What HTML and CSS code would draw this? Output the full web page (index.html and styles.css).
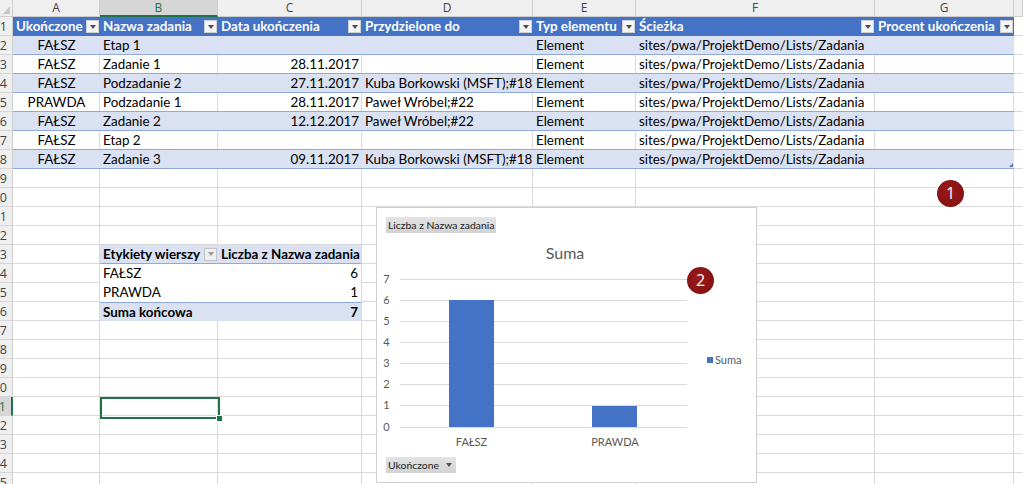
FILE: index.html
```html
<!DOCTYPE html>
<html lang="pl">
<head>
<meta charset="utf-8">
<title>Zadania</title>
<link rel="stylesheet" href="styles.css">
</head>
<body>
<div class="app">
  <div class="sheet">
    <div class="corner"></div>
    <div class="ch">A</div>
    <div class="ch selcol">B</div>
    <div class="ch">C</div>
    <div class="ch">D</div>
    <div class="ch">E</div>
    <div class="ch">F</div>
    <div class="ch">G</div>
    <div class="ch"></div>

    <div class="rowheads">
      <div class="rh">1</div><div class="rh">2</div><div class="rh">3</div><div class="rh">4</div><div class="rh">5</div>
      <div class="rh">6</div><div class="rh">7</div><div class="rh">8</div><div class="rh">9</div><div class="rh">10</div>
      <div class="rh">11</div><div class="rh">12</div><div class="rh">13</div><div class="rh">14</div><div class="rh">15</div>
      <div class="rh">16</div><div class="rh">17</div><div class="rh">18</div><div class="rh">19</div><div class="rh">20</div>
      <div class="rh selrow">21</div><div class="rh">22</div><div class="rh">23</div><div class="rh">24</div><div class="rh">25</div>
    </div>

    <div class="vl col-a"></div>
    <div class="vl col-b"></div>
    <div class="vl col-c"></div>
    <div class="vl col-d"></div>
    <div class="vl col-e"></div>
    <div class="vl col-f"></div>
    <div class="vl col-g"></div>

    <div class="tbl">
      <div class="tr th">
        <div class="hc"><span>Ukończone</span><i class="dd"></i></div>
        <div class="hc"><span>Nazwa zadania</span><i class="dd"></i></div>
        <div class="hc"><span>Data ukończenia</span><i class="dd"></i></div>
        <div class="hc"><span>Przydzielone do</span><i class="dd"></i></div>
        <div class="hc"><span>Typ elementu</span><i class="dd"></i></div>
        <div class="hc"><span>Ścieżka</span><i class="dd"></i></div>
        <div class="hc"><span>Procent ukończenia</span><i class="dd"></i></div>
      </div>
      <div class="tr band">
        <div class="c ctr">FAŁSZ</div><div class="c">Etap 1</div><div class="c r"></div><div class="c"></div><div class="c">Element</div><div class="c">sites/pwa/ProjektDemo/Lists/Zadania</div><div class="c"></div>
      </div>
      <div class="tr">
        <div class="c ctr">FAŁSZ</div><div class="c">Zadanie 1</div><div class="c r">28.11.2017</div><div class="c"></div><div class="c">Element</div><div class="c">sites/pwa/ProjektDemo/Lists/Zadania</div><div class="c"></div>
      </div>
      <div class="tr band">
        <div class="c ctr">FAŁSZ</div><div class="c">Podzadanie 2</div><div class="c r">27.11.2017</div><div class="c">Kuba Borkowski (MSFT);#18</div><div class="c">Element</div><div class="c">sites/pwa/ProjektDemo/Lists/Zadania</div><div class="c"></div>
      </div>
      <div class="tr">
        <div class="c ctr">PRAWDA</div><div class="c">Podzadanie 1</div><div class="c r">28.11.2017</div><div class="c">Paweł Wróbel;#22</div><div class="c">Element</div><div class="c">sites/pwa/ProjektDemo/Lists/Zadania</div><div class="c"></div>
      </div>
      <div class="tr band">
        <div class="c ctr">FAŁSZ</div><div class="c">Zadanie 2</div><div class="c r">12.12.2017</div><div class="c">Paweł Wróbel;#22</div><div class="c">Element</div><div class="c">sites/pwa/ProjektDemo/Lists/Zadania</div><div class="c"></div>
      </div>
      <div class="tr">
        <div class="c ctr">FAŁSZ</div><div class="c">Etap 2</div><div class="c r"></div><div class="c"></div><div class="c">Element</div><div class="c">sites/pwa/ProjektDemo/Lists/Zadania</div><div class="c"></div>
      </div>
      <div class="tr band last">
        <div class="c ctr">FAŁSZ</div><div class="c">Zadanie 3</div><div class="c r">09.11.2017</div><div class="c">Kuba Borkowski (MSFT);#18</div><div class="c">Element</div><div class="c">sites/pwa/ProjektDemo/Lists/Zadania</div><div class="c"></div>
      </div>
      <i class="resize"></i>
    </div>

    <div class="pivot">
      <div class="pr ph">
        <div class="hc"><span>Etykiety wierszy</span><i class="dd pdd"></i></div>
        <div class="c">Liczba z Nazwa zadania</div>
      </div>
      <div class="pr"><div class="c">FAŁSZ</div><div class="c r">6</div></div>
      <div class="pr"><div class="c">PRAWDA</div><div class="c r">1</div></div>
      <div class="pr pt"><div class="c">Suma końcowa</div><div class="c r">7</div></div>
    </div>

    <div class="sel"><i class="handle"></i></div>
  </div>

  <div class="chart">
    <div class="fbtn">Liczba z Nazwa zadania</div>
    <svg class="plot" width="379" height="224" viewBox="0 0 379 224">
      <text class="title" x="188" y="26" text-anchor="middle">Suma</text>
      <g class="grid">
        <line x1="23" x2="310" y1="46.5" y2="46.5"/>
        <line x1="23" x2="310" y1="67.5" y2="67.5"/>
        <line x1="23" x2="310" y1="88.5" y2="88.5"/>
        <line x1="23" x2="310" y1="109.5" y2="109.5"/>
        <line x1="23" x2="310" y1="130.5" y2="130.5"/>
        <line x1="23" x2="310" y1="151.5" y2="151.5"/>
        <line x1="23" x2="310" y1="172.5" y2="172.5"/>
        <line x1="23" x2="310" y1="194.5" y2="194.5"/>
      </g>
      <g class="ylab" text-anchor="middle">
        <text x="9.5" y="50">7</text>
        <text x="9.5" y="71">6</text>
        <text x="9.5" y="92">5</text>
        <text x="9.5" y="113">4</text>
        <text x="9.5" y="134">3</text>
        <text x="9.5" y="155">2</text>
        <text x="9.5" y="176">1</text>
        <text x="9.5" y="198">0</text>
      </g>
      <rect class="bar" x="72" y="67" width="45" height="127"/>
      <rect class="bar" x="215" y="173" width="45" height="21"/>
      <g class="xlab" text-anchor="middle">
        <text x="94.5" y="213">FAŁSZ</text>
        <text x="238" y="213">PRAWDA</text>
      </g>
      <rect class="bar" x="330" y="124" width="6" height="6"/>
      <text class="leg" x="338" y="131">Suma</text>
    </svg>
    <div class="fbtn">Ukończone <i class="tri"></i></div>
  </div>

  <div class="badge b1">1</div>
  <div class="badge b2">2</div>
</div>
</body>
</html>
```

FILE: styles.css
```css
:root {
  --tcols: 87px 118px 144px 171px 103px 239px 139px;
  --grid: #dadada;
  --hdr: #efefef;
  --hdr-line: #cdcdcd;
  --blue: #4472c4;
  --band: #d9e1f2;
  --tline: #8ea9db;
  --green: #217346;
}

html, body {
  margin: 0;
  background: #fff;
  overflow: hidden;
}

body {
  font-family: Lato, "Noto Sans", sans-serif;
  color: #000;
}

.app {
  position: relative;
  width: 1023px;
  height: 484px;
  overflow: hidden;
}

.sheet {
  display: grid;
  grid-template-columns: 13px var(--tcols) 1fr;
  grid-template-rows: 17px repeat(25, 19px);
  background-image: repeating-linear-gradient(to bottom, transparent 0 18px, var(--grid) 18px 19px);
  background-position: 0 17px;
}

.corner {
  grid-row: 1;
  grid-column: 1;
  background:
    linear-gradient(135deg, transparent 60%, #c9c9c9 60%) no-repeat right 2px bottom 2px / 9px 9px,
    var(--hdr);
  border-right: 1px solid var(--hdr-line);
  border-bottom: 1px solid var(--hdr-line);
}

.ch {
  grid-row: 1;
  background: var(--hdr);
  border-right: 1px solid var(--hdr-line);
  border-bottom: 1px solid var(--hdr-line);
  font-family: "Open Sans", sans-serif;
  font-size: 12px;
  line-height: 16px;
  color: #444;
  text-align: center;
}

.ch.selcol {
  background: #d6d6d6;
  color: var(--green);
  border-bottom: 2px solid var(--green);
}

.rowheads {
  grid-column: 1;
  grid-row: 2 / -1;
  display: flex;
  flex-direction: column;
}

.rh {
  height: 19px;
  flex: none;
  box-sizing: border-box;
  display: flex;
  justify-content: flex-end;
  align-items: center;
  padding-right: 5px;
  background: var(--hdr);
  border-right: 1px solid var(--hdr-line);
  border-bottom: 1px solid #d6d6d6;
  font-family: "Open Sans", sans-serif;
  font-size: 12.5px;
  color: #444;
  overflow: hidden;
  white-space: nowrap;
}

.rh.selrow {
  background: #d6d6d6;
  color: var(--green);
  border-right: 2px solid var(--green);
}

.vl {
  grid-row: 2 / -1;
  border-right: 1px solid var(--grid);
}

.col-a { grid-column: 2; }
.col-b { grid-column: 3; }
.col-c { grid-column: 4; }
.col-d { grid-column: 5; }
.col-e { grid-column: 6; }
.col-f { grid-column: 7; }
.col-g { grid-column: 8; }

.tbl {
  grid-column: 2 / 9;
  grid-row: 2 / 10;
  display: flex;
  flex-direction: column;
  position: relative;
}

.tr {
  display: grid;
  grid-template-columns: var(--tcols);
  height: 19px;
  box-sizing: border-box;
  border-bottom: 1px solid var(--tline);
  font-size: 13.4px;
  line-height: 18px;
}

.tr.th {
  background: var(--blue);
  color: #fff;
  font-weight: 700;
  border-bottom: none;
  line-height: 19px;
}

.tr.band {
  background: var(--band);
}

.c {
  padding: 0 3px;
  white-space: nowrap;
  overflow: hidden;
}

.ctr { text-align: center; }
.r { text-align: right; }

.hc {
  display: flex;
  align-items: center;
  justify-content: space-between;
  padding: 0 1px 0 3px;
  white-space: nowrap;
  overflow: hidden;
}

.dd {
  flex: none;
  width: 13px;
  height: 13px;
  box-sizing: border-box;
  background: #f5f5f5;
  border: 1px solid #d0d0d0;
  display: flex;
  align-items: center;
  justify-content: center;
}

.dd::after {
  content: "";
  border-left: 3px solid transparent;
  border-right: 3px solid transparent;
  border-top: 4px solid #4d4d4d;
}

.resize {
  position: absolute;
  right: 1px;
  bottom: 2px;
  width: 0;
  height: 0;
  border-left: 4px solid transparent;
  border-bottom: 4px solid #5b7cc0;
}

.pivot {
  grid-column: 3 / 5;
  grid-row: 14 / 18;
  margin-right: 1px;
  display: flex;
  flex-direction: column;
  background: #fff;
}

.pr {
  display: grid;
  grid-template-columns: 118px 143px;
  height: 19px;
  box-sizing: border-box;
  font-size: 13.4px;
  line-height: 19px;
}

.pr.ph {
  background: var(--band);
  border-bottom: 1px solid var(--tline);
  font-weight: 700;
  line-height: 18px;
}

.pr.pt {
  background: var(--band);
  border-top: 1px solid var(--tline);
  font-weight: 700;
  line-height: 18px;
}

.pdd {
  background: #eeeeee;
  border-color: #c4c4c4;
}

.pdd::after {
  border-top-color: #9a9a9a;
}

.sel {
  grid-column: 3;
  grid-row: 22;
  margin: 0 -2px -3px 0;
  border: 2px solid var(--green);
  box-sizing: border-box;
  position: relative;
}

.handle {
  position: absolute;
  right: -5px;
  bottom: -5px;
  width: 5px;
  height: 5px;
  background: var(--green);
  border: 1px solid #fff;
}

.chart {
  position: absolute;
  left: 376px;
  top: 207px;
  width: 381px;
  height: 276px;
  box-sizing: border-box;
  padding: 9px;
  border: 1px solid #d0d0d0;
  background: #fff;
  display: flex;
  flex-direction: column;
  align-items: flex-start;
}

.plot {
  display: block;
  margin: 0 -9px;
  flex: none;
}

.fbtn {
  height: 16px;
  box-sizing: border-box;
  padding: 0 2px;
  background: linear-gradient(#e4e4e4, #d2d2d2);
  font-family: Lato, "Noto Sans", sans-serif;
  font-size: 10.4px;
  line-height: 16px;
  color: #222;
  white-space: nowrap;
  display: flex;
  align-items: center;
  gap: 7px;
}

.tri {
  display: inline-block;
  margin-right: 2px;
  border-left: 3px solid transparent;
  border-right: 3px solid transparent;
  border-top: 4px solid #555;
}

.title {
  font-family: Lato, "Noto Sans", sans-serif;
  font-size: 16px;
  fill: #595959;
}

.grid line {
  stroke: #d9d9d9;
  stroke-width: 1;
}

.ylab text, .xlab text, .leg {
  font-family: Lato, "Noto Sans", sans-serif;
  font-size: 11px;
  fill: #595959;
}

.bar {
  fill: #4472c4;
}

.badge {
  position: absolute;
  width: 27px;
  height: 27px;
  border-radius: 50%;
  background: radial-gradient(circle at 45% 40%, #9a1a1a, #7e0f0f);
  color: #fff;
  font-family: "Open Sans", sans-serif;
  font-size: 16px;
  line-height: 27px;
  text-align: center;
}

.b1 { left: 937px; top: 180px; }
.b2 { left: 687px; top: 267px; }
```
